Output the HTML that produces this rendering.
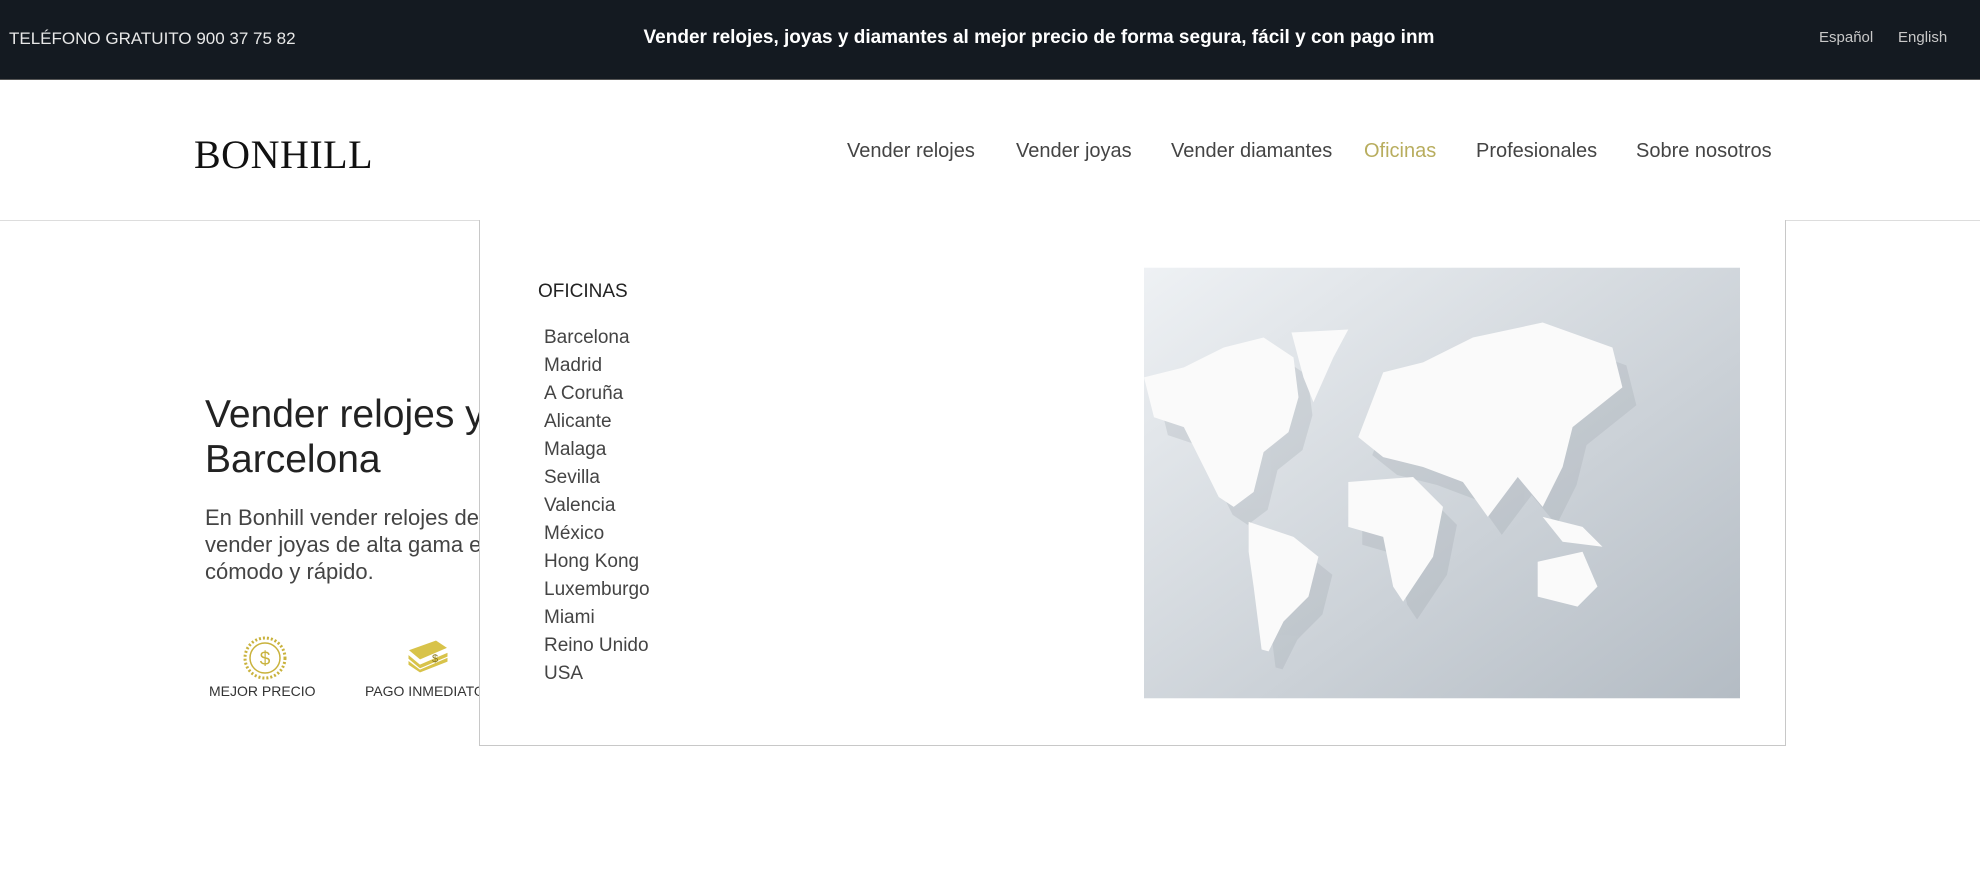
<!DOCTYPE html>
<html><head><meta charset="utf-8"><style>
*{margin:0;padding:0;box-sizing:border-box}
body{width:1980px;height:878px;overflow:hidden;background:#fff;font-family:"Liberation Sans",sans-serif;color:#333;position:relative}
.top{position:absolute;left:0;top:0;width:1980px;height:80px;background:#141a21;border-bottom:1px solid #555}
.top .ph{position:absolute;left:9px;top:29px;color:#e8e8e8;font-size:17px}
.top .ct{position:absolute;left:0;width:2078px;text-align:center;top:27px;color:#fff;font-size:19px;font-weight:bold}
.top .lang{position:absolute;top:29px;color:#c8c8c8;font-size:15px}
.hdr{position:absolute;left:0;top:80px;width:1980px;height:141px;border-bottom:1px solid #ddd}
.logo{position:absolute;left:194px;top:131px;font-family:"Liberation Serif",serif;font-size:40px;letter-spacing:0.5px;color:#111}
.nav{position:absolute;top:140px;font-size:20px;color:#444}
.hero h1{position:absolute;left:205px;top:392px;font-weight:normal;font-size:39px;line-height:45px;color:#222}
.hero p{position:absolute;left:205px;top:504px;font-size:22px;line-height:27px;color:#444;white-space:nowrap}
.lab{position:absolute;top:683px;font-size:14px;color:#333}
.dd{position:absolute;left:479px;top:220px;width:1307px;height:526px;background:#fff;border:1px solid #c8c8c8;border-top:none}
.dd h3{position:absolute;left:58px;top:61px;font-weight:normal;font-size:19px;color:#222}
.dd ul{position:absolute;left:64px;top:104px;list-style:none;font-size:19px;line-height:28px;color:#444}
.map{position:absolute;left:664px;top:47px;width:596px;height:432px}
</style></head><body>
<div class="top">
<div class="ph">TELÉFONO GRATUITO 900 37 75 82</div>
<div class="ct">Vender relojes, joyas y diamantes al mejor precio de forma segura, fácil y con pago inm</div>
<div class="lang" style="left:1819px">Español</div>
<div class="lang" style="left:1898px">English</div>
</div>
<div class="hdr"></div>
<div class="logo">BONHILL</div>
<div class="nav" style="left:847px">Vender relojes</div>
<div class="nav" style="left:1016px">Vender joyas</div>
<div class="nav" style="left:1171px">Vender diamantes</div>
<div class="nav" style="left:1364px;color:#b8ad5e">Oficinas</div>
<div class="nav" style="left:1476px">Profesionales</div>
<div class="nav" style="left:1636px">Sobre nosotros</div>
<div class="hero">
<h1>Vender relojes y joyas en<br>Barcelona</h1>
<p>En Bonhill vender relojes de lujo y<br>vender joyas de alta gama es seguro,<br>cómodo y rápido.</p>
</div>
<svg style="position:absolute;left:242px;top:635px" width="46" height="46" viewBox="0 0 46 46">
<circle cx="23" cy="23" r="20" fill="none" stroke="#c9b23c" stroke-width="3" stroke-dasharray="2 2"/>
<circle cx="23" cy="23" r="15" fill="none" stroke="#c9b23c" stroke-width="1.5"/>
<text x="23" y="30" text-anchor="middle" font-size="19" fill="#c9b23c" font-family="Liberation Sans">$</text></svg>
<div class="lab" style="left:209px">MEJOR PRECIO</div>
<svg style="position:absolute;left:406px;top:638px" width="44" height="36" viewBox="0 0 44 36">
<g fill="#d8c34a" stroke="#fff" stroke-width="1"><path d="M2 12 L30 2 L42 10 L14 22Z"/><path d="M2 16 L14 26 L42 14 L42 19 L14 31 L2 21Z"/><path d="M2 22 L14 31 L42 19 L42 24 L14 35 L2 27Z"/></g>
<text x="26" y="24" font-size="11" fill="#8a7a20">$</text></svg>
<div class="lab" style="left:365px">PAGO INMEDIATO</div>
<div class="dd">
<h3>OFICINAS</h3>
<ul><li>Barcelona</li><li>Madrid</li><li>A Coruña</li><li>Alicante</li><li>Malaga</li><li>Sevilla</li><li>Valencia</li><li>México</li><li>Hong Kong</li><li>Luxemburgo</li><li>Miami</li><li>Reino Unido</li><li>USA</li></ul>
<svg class="map" viewBox="0 0 598 432">
<defs><linearGradient id="g" x1="0" y1="0" x2="1" y2="1"><stop offset="0" stop-color="#eef1f4"/><stop offset="1" stop-color="#b4bcc4"/></linearGradient></defs>
<rect width="598" height="432" fill="url(#g)"/>
<g fill="#9aa2aa" opacity=".25" transform="translate(14,18)">
<path d="M0 110 L40 100 L80 80 L120 70 L150 90 L155 130 L145 165 L120 185 L110 225 L90 240 L75 230 L60 200 L40 160 L10 150Z"/>
<path d="M105 255 L150 270 L175 290 L165 330 L140 355 L125 385 L118 383 L110 320 L105 285Z"/>
<path d="M215 170 L240 105 L280 95 L330 70 L400 55 L470 80 L480 120 L430 160 L420 200 L400 240 L375 210 L345 250 L320 215 L280 200 L240 190Z"/>
<path d="M205 215 L270 210 L300 240 L290 290 L260 335 L250 320 L240 270 L205 260Z"/>
</g>
<g fill="#fafafa">
<path d="M0 110 L40 100 L80 80 L120 70 L150 90 L155 130 L145 165 L120 185 L110 225 L90 240 L75 230 L60 200 L40 160 L10 150Z"/>
<path d="M148 65 L205 62 L190 90 L170 135 L160 110Z"/>
<path d="M105 255 L150 270 L175 290 L165 330 L140 355 L125 385 L118 383 L110 320 L105 285Z"/>
<path d="M215 170 L240 105 L280 95 L330 70 L400 55 L470 80 L480 120 L430 160 L420 200 L400 240 L375 210 L345 250 L320 215 L280 200 L240 190Z"/>
<path d="M205 215 L270 210 L300 240 L290 290 L260 335 L250 320 L240 270 L205 260Z"/>
<path d="M395 295 L440 285 L455 320 L435 340 L395 330Z"/>
<path d="M400 250 L440 260 L460 280 L420 275Z"/>
</g></svg>
</div>
</body></html>
